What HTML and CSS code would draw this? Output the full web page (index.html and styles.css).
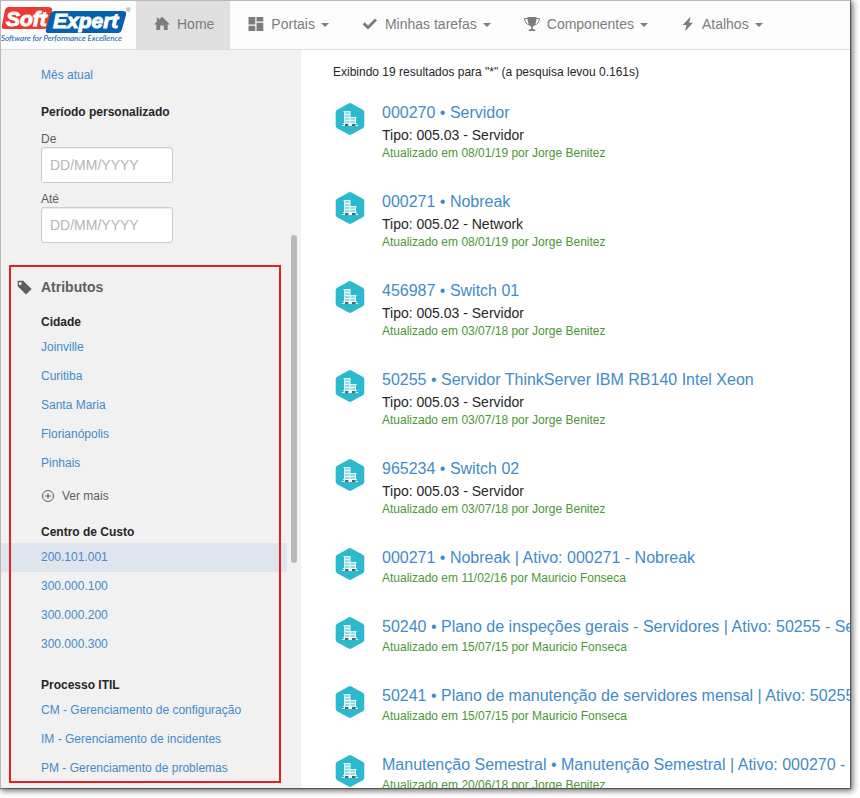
FILE: index.html
```html
<!DOCTYPE html>
<html lang="pt-BR">
<head>
<meta charset="utf-8">
<title>SoftExpert</title>
<link rel="stylesheet" href="styles.css">
</head>
<body>
<svg class="defs" aria-hidden="true">
  <symbol id="asset" viewBox="0 0 30 32">
    <path fill="#2db9cd" d="M13.6.4a3 3 0 0 1 2.8 0l11.4 6.3A3 3 0 0 1 29.300 9.200v13.600a3 3 0 0 1-1.500 2.500l-11.400 6.300a3 3 0 0 1-2.800 0L2.200 25.300A3 3 0 0 1 .7 22.800V9.200a3 3 0 0 1 1.500-2.500z"/>
    <path fill="#8fdde7" d="M9 8h6v12H9zM15 14h6v6h-6z"/>
    <path fill="#e9f9fb" d="M8.500 8H15v1H8.500zM9 11h6v1H9zM9 14h12.500v1H9zM9 17h12v1H9zM8 20h14v1H8zM7 22h16v1H7zM9 8h1v14H9zM14.500 8h1v14h-1zM20 14h1v8h-1z"/>
    <path fill="#4b6470" d="M10 21h3.500v2H10zM17 21h3.500v2H17z"/>
    <path fill="#fff" d="M13.500 20h3.500v3h-3.500z"/>
  </symbol>
</svg>
<div class="app">
  <header class="topbar">
    <a class="logo" href="#" aria-label="SoftExpert">
      <svg width="135" height="48" viewBox="1 1 135 48">
        <path fill="#ee3a2e" d="M8 7h40q5 0 4 4l-4 15q-1 3-4 3H4q-3 0-2-4L5 10q1-3 3-3z"/>
        <path fill="#0560ae" d="M55 11h68q4 0 3 4l-4 14q-1 4-4 4H48q-3 0-2-4l4-14q1-4 5-4z"/>
        <text class="brand" x="6" y="26">Soft</text>
        <text class="brand" x="53" y="28">Expert</text>
        <text class="reg" x="126" y="12">®</text>
        <text class="tagline" x="1" y="41">Software for Performance Excellence</text>
      </svg>
    </a>
    <nav class="menu">
      <a class="item active" href="#"><svg width="16" height="16" viewBox="0 0 16 16"><path d="M8 .8 16 8.500h-2.300V14H9.800V9.500H6.200V14H2.300V8.500H0L2.800 5.800V2h2v1.900z"/></svg>Home</a>
      <button class="item" type="button"><svg width="16" height="16" viewBox="0 0 16 16"><path d="M.5 1h6.800v7.600H.5zM8.500 1h6.800v4.500H8.500zM.5 9.800h6.800V15H.5zM8.500 6.700h6.800V15H8.500z"/></svg>Portais<i class="caret"></i></button>
      <button class="item" type="button"><svg width="16" height="16" viewBox="0 0 16 16"><path d="M.6 8.500 2.800 6.300l3.200 3.100L13 2.500l2 2L6 13.400z"/></svg>Minhas tarefas<i class="caret"></i></button>
      <button class="item" type="button"><svg width="16" height="16" viewBox="0 0 16 16"><path d="M3.500 1h9c0 5-1 8.500-3.700 9.500V13c1.700 0 2.700.8 2.700 2h-7c0-1.200 1-2 2.700-2v-2.500C4.500 9.500 3.500 6 3.500 1z"/><path class="line" d="M4 2.500H.6c0 3.500 2 6 5 6.500M12 2.500h3.400c0 3.500-2 6-5 6.500"/></svg>Componentes<i class="caret"></i></button>
      <button class="item" type="button"><svg width="14" height="16" viewBox="0 0 14 16"><path d="M9.500.8 1.500 9h4L4 15.200 12 6.700H8.200z"/></svg>Atalhos<i class="caret"></i></button>
    </nav>
  </header>
  <div class="body">
    <aside class="sidebar">
      <ul class="links"><li><a href="#">Mês atual</a></li></ul>
      <h3 class="group period">Período personalizado</h3>
      <form class="dates">
        <label for="from">De</label>
        <input id="from" type="text" placeholder="DD/MM/YYYY">
        <label for="to">Até</label>
        <input id="to" type="text" placeholder="DD/MM/YYYY">
      </form>
      <section class="attributes">
        <h2><svg width="15" height="15" viewBox="0 0 15 15"><path fill-rule="evenodd" d="M.7.7h5.500L14.600 9 9 14.600.7 6.300zM3.200 2a1.500 1.500 0 1 0 0 3 1.500 1.500 0 0 0 0-3z"/></svg>Atributos</h2>
        <h3 class="group">Cidade</h3>
        <ul class="links">
          <li><a href="#">Joinville</a></li>
          <li><a href="#">Curitiba</a></li>
          <li><a href="#">Santa Maria</a></li>
          <li><a href="#">Florianópolis</a></li>
          <li><a href="#">Pinhais</a></li>
        </ul>
        <button class="more" type="button"><svg width="14" height="14" viewBox="0 0 14 14"><circle cx="7" cy="7" r="5.500"/><path d="M7 4v6M4 7h6"/></svg>Ver mais</button>
        <h3 class="group cost">Centro de Custo</h3>
        <ul class="links">
          <li class="selected"><a href="#">200.101.001</a></li>
          <li><a href="#">300.000.100</a></li>
          <li><a href="#">300.000.200</a></li>
          <li><a href="#">300.000.300</a></li>
        </ul>
        <h3 class="group process">Processo ITIL</h3>
        <ul class="links">
          <li><a href="#">CM - Gerenciamento de configuração</a></li>
          <li><a href="#">IM - Gerenciamento de incidentes</a></li>
          <li><a href="#">PM - Gerenciamento de problemas</a></li>
        </ul>
        <div class="outline"></div>
      </section>
      <div class="thumb"></div>
    </aside>
    <main class="results">
      <p class="summary">Exibindo 19 resultados para "*" (a pesquisa levou 0.161s)</p>
      <article><svg class="hex"><use href="#asset"/></svg><div class="info"><a href="#">000270 • Servidor</a><p>Tipo: 005.03 - Servidor</p><small>Atualizado em 08/01/19 por Jorge Benitez</small></div></article>
      <article><svg class="hex"><use href="#asset"/></svg><div class="info"><a href="#">000271 • Nobreak</a><p>Tipo: 005.02 - Network</p><small>Atualizado em 08/01/19 por Jorge Benitez</small></div></article>
      <article><svg class="hex"><use href="#asset"/></svg><div class="info"><a href="#">456987 • Switch 01</a><p>Tipo: 005.03 - Servidor</p><small>Atualizado em 03/07/18 por Jorge Benitez</small></div></article>
      <article><svg class="hex"><use href="#asset"/></svg><div class="info"><a href="#">50255 • Servidor ThinkServer IBM RB140 Intel Xeon</a><p>Tipo: 005.03 - Servidor</p><small>Atualizado em 03/07/18 por Jorge Benitez</small></div></article>
      <article><svg class="hex"><use href="#asset"/></svg><div class="info"><a href="#">965234 • Switch 02</a><p>Tipo: 005.03 - Servidor</p><small>Atualizado em 03/07/18 por Jorge Benitez</small></div></article>
      <article><svg class="hex"><use href="#asset"/></svg><div class="info"><a href="#">000271 • Nobreak | Ativo: 000271 - Nobreak</a><small>Atualizado em 11/02/16 por Mauricio Fonseca</small></div></article>
      <article><svg class="hex"><use href="#asset"/></svg><div class="info"><a href="#">50240 • Plano de inspeções gerais - Servidores | Ativo: 50255 - Se</a><small>Atualizado em 15/07/15 por Mauricio Fonseca</small></div></article>
      <article><svg class="hex"><use href="#asset"/></svg><div class="info"><a href="#">50241 • Plano de manutenção de servidores mensal | Ativo: 50255</a><small>Atualizado em 15/07/15 por Mauricio Fonseca</small></div></article>
      <article><svg class="hex"><use href="#asset"/></svg><div class="info"><a href="#">Manutenção Semestral • Manutenção Semestral | Ativo: 000270 -</a><small>Atualizado em 20/06/18 por Jorge Benitez</small></div></article>
    </main>
  </div>
</div>
</body>
</html>
```
FILE: styles.css
```css
* { box-sizing: border-box; }
body {
  margin: 0;
  height: 100vh;
  padding: 0 10px 10px 0;
  background: #fff;
  font: 12px/16px Arial, "Liberation Sans", sans-serif;
  color: #262626;
  overflow: hidden;
}
h2, h3, p, ul { margin: 0; padding: 0; }
ul { list-style: none; }
a { color: #428bca; text-decoration: none; }
button { font: inherit; border: 0; background: none; padding: 0; }
.defs { position: absolute; width: 0; height: 0; }

.app {
  height: 100%;
  display: flex;
  flex-direction: column;
  border: 1px solid #b9b9b9;
  border-width: 1px 0 0 1px;
  background: #fff;
  box-shadow: 2px 2px 6px 1px #0000008c, 0 0 1px 1px #00000066;
  overflow: hidden;
}

.topbar {
  flex: none;
  display: flex;
  height: 49px;
  border-bottom: 1px solid #ddd;
  background: #fcfcfc;
}
.logo, .logo svg { display: block; }
.brand {
  font: italic bold 21px "Liberation Sans", sans-serif;
  fill: #fff;
  stroke: #fff;
  stroke-width: 1px;
}
.reg { font: 6px "Liberation Sans", sans-serif; fill: #0560ae; }
.tagline { font: italic 8px Lato, sans-serif; fill: #0560ae; }
.menu { display: flex; }
.item {
  display: flex;
  align-items: center;
  padding: 0 15px 2px 18px;
  font-size: 14px;
  color: #7c7c7c;
  white-space: nowrap;
}
.item svg { margin-right: 7px; fill: #7c7c7c; }
.item .line { fill: none; stroke: #7c7c7c; }
.active { background: #dfdfdf; padding-right: 16px; }
.caret {
  margin: 2px 0 0 6px;
  border: 4px solid transparent;
  border-top-color: #7c7c7c;
  border-bottom: 0;
}

.body { flex: 1; min-height: 0; display: flex; }
.sidebar {
  position: relative;
  flex: none;
  width: 300px;
  padding: 11px 14px 0 0;
  background: #f1f1f1;
  overflow: hidden;
}
.links li { padding-left: 40px; line-height: 29px; }
.links .selected { background: #dee5ed; }
.links a { display: block; }
.group { padding-left: 40px; font-size: 12px; line-height: 22px; }
.period { margin-top: 11px; }
.dates { display: flex; flex-direction: column; padding: 8px 0 0 40px; color: #5e5e5e; }
.dates input {
  width: 132px;
  height: 36px;
  margin-bottom: 8px;
  padding: 0 8px;
  border: 1px solid #ccc;
  border-radius: 3px;
  background: #fff;
  box-shadow: inset 0 1px 1px #00000013;
  font: 14px Arial, "Liberation Sans", sans-serif;
}
.dates input::placeholder { color: #b5b5b5; opacity: 1; }
.attributes { position: relative; padding-top: 25px; }
.attributes h2 {
  display: flex;
  align-items: center;
  gap: 9px;
  padding-left: 16px;
  margin-bottom: 13px;
  font-size: 14px;
  line-height: 22px;
  color: #5e5e5e;
}
.attributes h2 svg { fill: #5e5e5e; }
.more {
  display: flex;
  align-items: center;
  gap: 7px;
  height: 36px;
  padding-left: 40px;
  color: #5e5e5e;
}
.more svg { fill: none; stroke: #5e5e5e; }
.cost { margin-top: 7px; }
.process { margin-top: 15px; }
.outline {
  position: absolute;
  inset: 14px 6px 0 8px;
  border: 2px solid #ed1c24;
  pointer-events: none;
}
.thumb {
  position: absolute;
  top: 185px;
  right: 4px;
  width: 6px;
  height: 328px;
  border-radius: 3px;
  background: #b9b9b9;
}

.results { flex: 1; min-width: 0; padding: 14px 0 0 32px; overflow: hidden; }
.summary { margin-bottom: 21px; }
article { display: flex; margin-bottom: 28px; }
.hex { flex: none; width: 30px; height: 32px; margin: 2px 17px 0 2px; }
.info { min-width: 0; overflow: hidden; white-space: nowrap; }
.info a { display: block; font-size: 16px; line-height: 24px; }
.info p { font-size: 14px; line-height: 20px; }
.info small { display: block; font-size: 12px; line-height: 17px; color: #4b9635; }
```
